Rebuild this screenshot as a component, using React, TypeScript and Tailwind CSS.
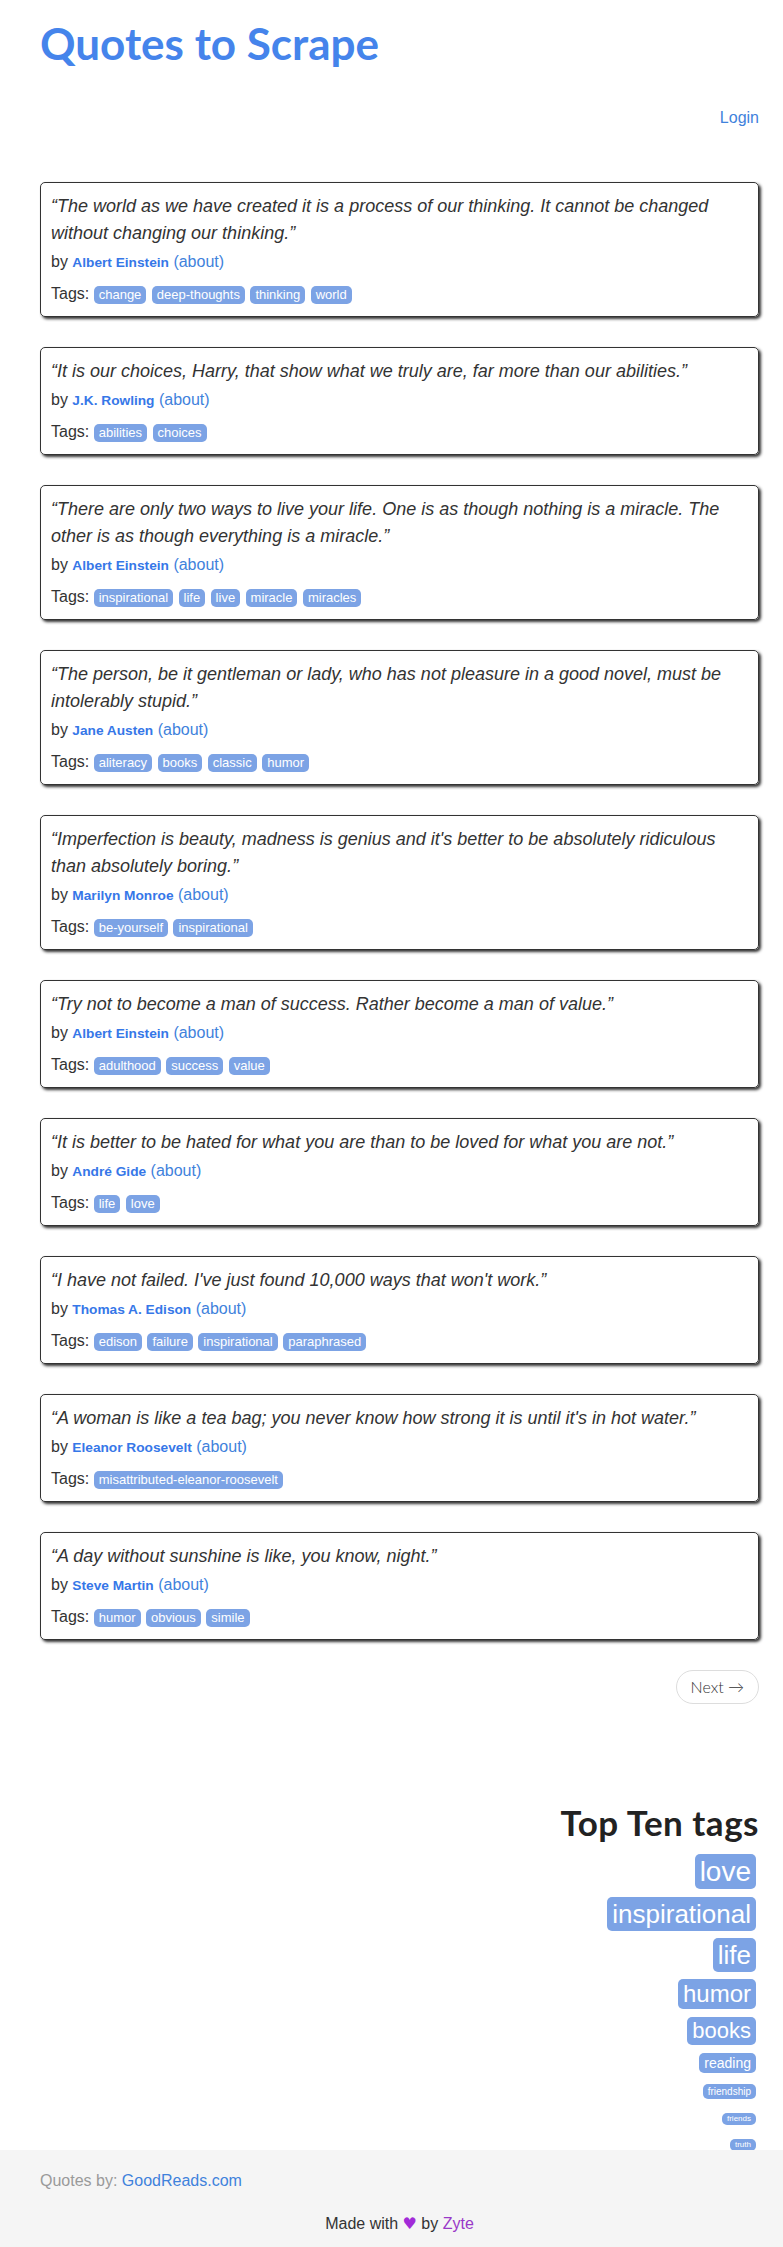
import React from "react";

type Quote = {
    text: string;
    author: string;
    tags: string[];
};

const quotes: Quote[] = [
    {
        text: "“The world as we have created it is a process of our thinking. It cannot be changed without changing our thinking.”",
        author: "Albert Einstein",
        tags: ["change", "deep-thoughts", "thinking", "world"],
    },
    {
        text: "“It is our choices, Harry, that show what we truly are, far more than our abilities.”",
        author: "J.K. Rowling",
        tags: ["abilities", "choices"],
    },
    {
        text: "“There are only two ways to live your life. One is as though nothing is a miracle. The other is as though everything is a miracle.”",
        author: "Albert Einstein",
        tags: ["inspirational", "life", "live", "miracle", "miracles"],
    },
    {
        text: "“The person, be it gentleman or lady, who has not pleasure in a good novel, must be intolerably stupid.”",
        author: "Jane Austen",
        tags: ["aliteracy", "books", "classic", "humor"],
    },
    {
        text: "“Imperfection is beauty, madness is genius and it's better to be absolutely ridiculous than absolutely boring.”",
        author: "Marilyn Monroe",
        tags: ["be-yourself", "inspirational"],
    },
    {
        text: "“Try not to become a man of success. Rather become a man of value.”",
        author: "Albert Einstein",
        tags: ["adulthood", "success", "value"],
    },
    {
        text: "“It is better to be hated for what you are than to be loved for what you are not.”",
        author: "André Gide",
        tags: ["life", "love"],
    },
    {
        text: "“I have not failed. I've just found 10,000 ways that won't work.”",
        author: "Thomas A. Edison",
        tags: ["edison", "failure", "inspirational", "paraphrased"],
    },
    {
        text: "“A woman is like a tea bag; you never know how strong it is until it's in hot water.”",
        author: "Eleanor Roosevelt",
        tags: ["misattributed-eleanor-roosevelt"],
    },
    {
        text: "“A day without sunshine is like, you know, night.”",
        author: "Steve Martin",
        tags: ["humor", "obvious", "simile"],
    },
];

const topTags = [
    { name: "love", cls: "mt-[12px] h-[35px] leading-[35px] text-[28px]" },
    { name: "inspirational", cls: "mt-[8px] h-[34px] leading-[34px] text-[26px]" },
    { name: "life", cls: "mt-[7px] h-[34px] leading-[34px] text-[26px]" },
    { name: "humor", cls: "mt-[7px] h-[30px] leading-[30px] text-[24px]" },
    { name: "books", cls: "mt-[8px] h-[28px] leading-[28px] text-[22px]" },
    { name: "reading", cls: "mt-[8px] h-[20px] leading-[20px] text-[14px]" },
    { name: "friendship", cls: "mt-[11px] h-[15px] leading-[15px] text-[10px]" },
    { name: "friends", cls: "mt-[14px] h-[12px] leading-[12px] text-[8px]" },
    { name: "truth", cls: "mt-[14px] h-[12px] leading-[12px] text-[8px]" },
    { name: "simile", cls: "mt-[14px] h-[10px] leading-[10px] text-[6px]" },
];

function QuoteCard({ quote }: { quote: Quote }) {
    return (
        <div className="mb-[30px] rounded-[5px] border border-[#333] p-[10px] shadow-[2px_2px_3px_#333]">
            <span className="mb-[5px] block text-[18px] italic leading-[27px]">{quote.text}</span>
            <div className="h-[20px] text-[16px] leading-[20px]">
                by <small className="text-[13.7px] font-bold text-[#3677e8]">{quote.author}</small>{" "}
                <a href="#" className="text-[#3f82dc]">(about)</a>
            </div>
            <div className="mt-[10px] h-[24px] text-[16px] leading-[24px]">
                Tags:{" "}
                {quote.tags.map((tag) => (
                    <React.Fragment key={tag}>
                        <a
                            href="#"
                            className="mr-[1px] inline-block rounded-[5px] bg-[#7ca3e5] px-[5px] align-baseline text-[13px] leading-[18px] text-white"
                        >
                            {tag}
                        </a>{" "}
                    </React.Fragment>
                ))}
            </div>
        </div>
    );
}

export default function App() {
    return (
        <div className="min-h-[2247px] bg-white font-['Liberation_Sans',Arial,sans-serif] text-[#333]">
            <div className="h-[2150px] overflow-hidden">
                <div className="ml-[40px] w-[719px]">
                    {/* Header */}
                    <div className="pt-[19px]">
                        <h1 className="font-['Lato',sans-serif] text-[44px] font-bold leading-[48px] text-[#4584eb]">
                            Quotes to Scrape
                        </h1>
                    </div>
                    <p className="mt-[41px] text-right text-[16px] leading-[20px]">
                        <a href="#" className="text-[#3f82dc]">Login</a>
                    </p>

                    {/* Quotes */}
                    <div className="mt-[54px]">
                        {quotes.map((q, i) => (
                            <QuoteCard key={i} quote={q} />
                        ))}
                    </div>

                    {/* Pager */}
                    <div className="flex justify-end">
                        <a
                            href="#"
                            className="h-[34px] rounded-[17px] border border-[#ddd] bg-white px-[14px] font-['Lato',sans-serif] text-[16px] font-light leading-[32px] text-[#333]"
                        >
                            Next <span aria-hidden="true">→</span>
                        </a>
                    </div>

                    {/* Top Ten tags */}
                    <div className="mt-[98px] flex flex-col items-end">
                        <h2 className="font-['Lato',sans-serif] text-[35px] font-bold leading-[40px] tracking-[0.5px] text-[#222]">
                            Top Ten tags
                        </h2>
                        {topTags.map((t) => (
                            <a
                                key={t.name}
                                href="#"
                                className={`mr-[3px] block rounded-[5px] bg-[#7ca3e5] px-[5px] text-white ${t.cls}`}
                            >
                                {t.name}
                            </a>
                        ))}
                    </div>
                </div>
            </div>

            {/* Footer */}
            <footer className="h-[97px] bg-[#f5f5f5] pt-[21px]">
                <div className="ml-[40px] w-[719px] text-[16px] leading-[20px]">
                    <p className="text-[#9a9a9a]">
                        Quotes by: <a href="#" className="text-[#3f82dc]">GoodReads.com</a>
                    </p>
                    <p className="mt-[23px] text-center text-[#333]">
                        Made with <span className="font-['DejaVu_Sans',sans-serif] text-[#a22bd8]">♥</span> by{" "}
                        <a href="#" className="text-[#9a39c8]">Zyte</a>
                    </p>
                </div>
            </footer>
        </div>
    );
}
